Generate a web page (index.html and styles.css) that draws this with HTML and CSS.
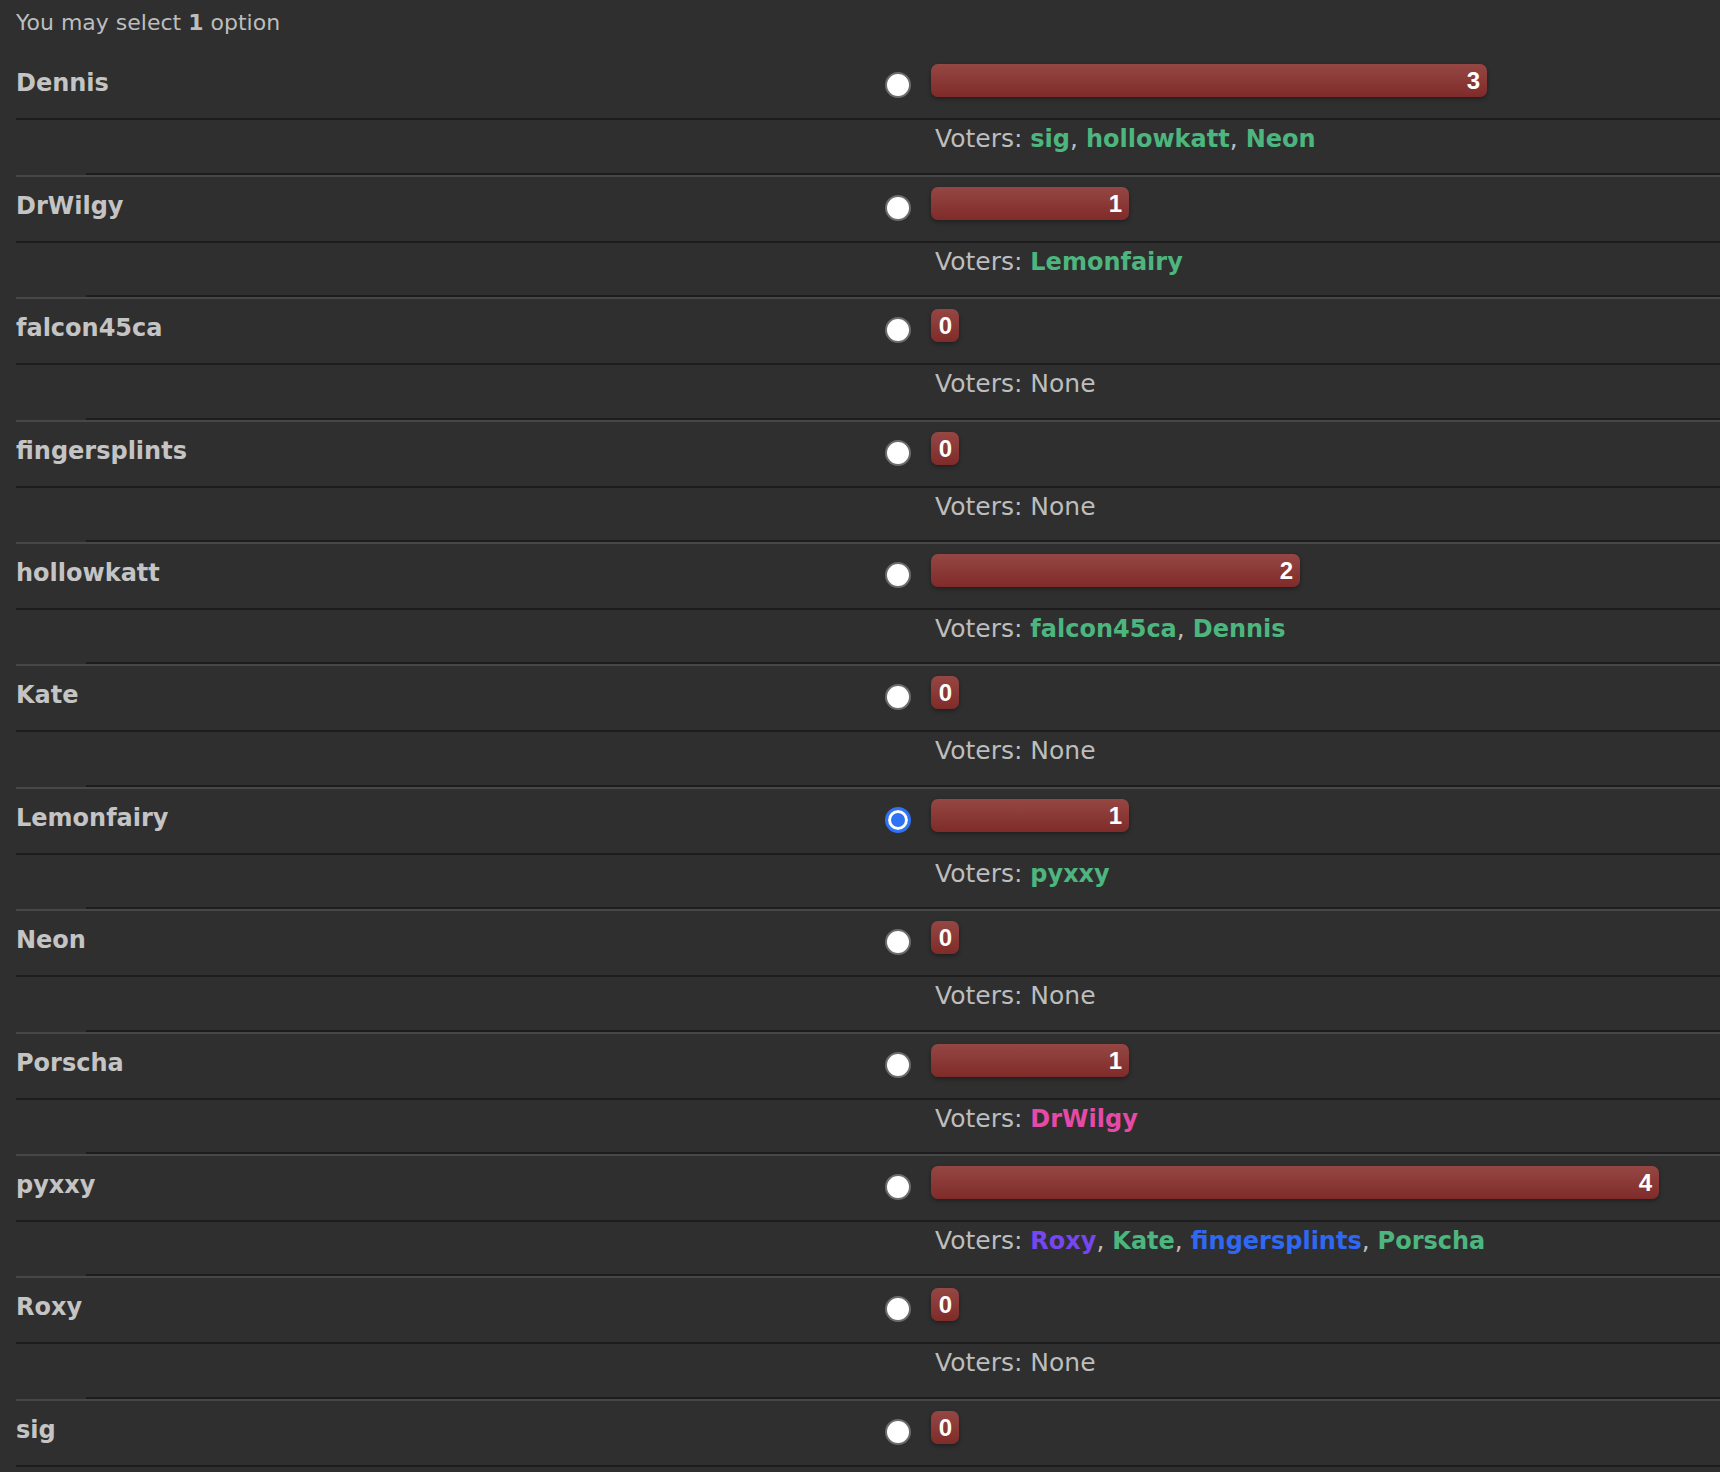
FILE: index.html
```html
<!DOCTYPE html>
<html lang="en">
<head>
  <meta charset="UTF-8" />
  <meta name="viewport" content="width=device-width, initial-scale=1.0" />
  <title>Poll</title>
  <link rel="stylesheet" href="styles.css">
</head>
<body>
  <div class="poll">
    <p class="poll-info">You may select <b>1</b> option</p>

    <!-- one .option per candidate: name/radio/bar row, then voters row -->
    <div class="option first">
      <div class="option-main">
        <span class="option-name">Dennis</span>
        <span class="option-pick"><input type="radio" name="vote" /></span>
        <span class="option-bar"><span class="bar" style="width:556px">3</span></span>
      </div>
      <div class="option-voters">
        <span class="voters-gap"></span>
        <span class="voters">Voters: <b class="user green">sig</b>, <b class="user green">hollowkatt</b>, <b class="user green">Neon</b></span>
      </div>
    </div>

    <div class="option">
      <div class="option-main">
        <span class="option-name">DrWilgy</span>
        <span class="option-pick"><input type="radio" name="vote" /></span>
        <span class="option-bar"><span class="bar" style="width:198px">1</span></span>
      </div>
      <div class="option-voters">
        <span class="voters-gap"></span>
        <span class="voters">Voters: <b class="user green">Lemonfairy</b></span>
      </div>
    </div>

    <div class="option">
      <div class="option-main">
        <span class="option-name">falcon45ca</span>
        <span class="option-pick"><input type="radio" name="vote" /></span>
        <span class="option-bar"><span class="bar">0</span></span>
      </div>
      <div class="option-voters">
        <span class="voters-gap"></span>
        <span class="voters">Voters: None</span>
      </div>
    </div>

    <div class="option">
      <div class="option-main">
        <span class="option-name">fingersplints</span>
        <span class="option-pick"><input type="radio" name="vote" /></span>
        <span class="option-bar"><span class="bar">0</span></span>
      </div>
      <div class="option-voters">
        <span class="voters-gap"></span>
        <span class="voters">Voters: None</span>
      </div>
    </div>

    <div class="option">
      <div class="option-main">
        <span class="option-name">hollowkatt</span>
        <span class="option-pick"><input type="radio" name="vote" /></span>
        <span class="option-bar"><span class="bar" style="width:369px">2</span></span>
      </div>
      <div class="option-voters">
        <span class="voters-gap"></span>
        <span class="voters">Voters: <b class="user green">falcon45ca</b>, <b class="user green">Dennis</b></span>
      </div>
    </div>

    <div class="option">
      <div class="option-main">
        <span class="option-name">Kate</span>
        <span class="option-pick"><input type="radio" name="vote" /></span>
        <span class="option-bar"><span class="bar">0</span></span>
      </div>
      <div class="option-voters">
        <span class="voters-gap"></span>
        <span class="voters">Voters: None</span>
      </div>
    </div>

    <div class="option">
      <div class="option-main">
        <span class="option-name">Lemonfairy</span>
        <span class="option-pick"><input type="radio" name="vote" checked /></span>
        <span class="option-bar"><span class="bar" style="width:198px">1</span></span>
      </div>
      <div class="option-voters">
        <span class="voters-gap"></span>
        <span class="voters">Voters: <b class="user green">pyxxy</b></span>
      </div>
    </div>

    <div class="option">
      <div class="option-main">
        <span class="option-name">Neon</span>
        <span class="option-pick"><input type="radio" name="vote" /></span>
        <span class="option-bar"><span class="bar">0</span></span>
      </div>
      <div class="option-voters">
        <span class="voters-gap"></span>
        <span class="voters">Voters: None</span>
      </div>
    </div>

    <div class="option">
      <div class="option-main">
        <span class="option-name">Porscha</span>
        <span class="option-pick"><input type="radio" name="vote" /></span>
        <span class="option-bar"><span class="bar" style="width:198px">1</span></span>
      </div>
      <div class="option-voters">
        <span class="voters-gap"></span>
        <span class="voters">Voters: <b class="user pink">DrWilgy</b></span>
      </div>
    </div>

    <div class="option">
      <div class="option-main">
        <span class="option-name">pyxxy</span>
        <span class="option-pick"><input type="radio" name="vote" /></span>
        <span class="option-bar"><span class="bar" style="width:728px">4</span></span>
      </div>
      <div class="option-voters">
        <span class="voters-gap"></span>
        <span class="voters">Voters: <b class="user purple">Roxy</b>, <b class="user green">Kate</b>, <b class="user blue">fingersplints</b>, <b class="user green">Porscha</b></span>
      </div>
    </div>

    <div class="option">
      <div class="option-main">
        <span class="option-name">Roxy</span>
        <span class="option-pick"><input type="radio" name="vote" /></span>
        <span class="option-bar"><span class="bar">0</span></span>
      </div>
      <div class="option-voters">
        <span class="voters-gap"></span>
        <span class="voters">Voters: None</span>
      </div>
    </div>

    <div class="option">
      <div class="option-main">
        <span class="option-name">sig</span>
        <span class="option-pick"><input type="radio" name="vote" /></span>
        <span class="option-bar"><span class="bar">0</span></span>
      </div>
      <div class="option-voters">
        <span class="voters-gap"></span>
        <span class="voters">Voters: None</span>
      </div>
    </div>
  </div>
</body>
</html>
```

FILE: styles.css
```css
/* theme */
:root {
  --bg: #2f2f2f;
  --text: #bdbdbd;
  --name: #c4c4c4;
  --line-dark: #1d1d1d;
  --line-light: #474747;
  --green: #4db67f;
  --pink: #e64aa6;
  --purple: #7646f2;
  --blue: #2f69f3;
}

body {
  margin: 0;
  background: var(--bg);
  color: var(--text);
  font-family: "DejaVu Sans", Verdana, sans-serif;
  overflow: hidden;
}

.poll {
  padding-left: 16px;
}

.poll-info {
  margin: 0;
  padding-top: 8px;
  height: 44.4px;
  font-size: 22px;
  line-height: 30px;
}

/* option rows */
.option-main {
  display: grid;
  grid-template-columns: 853px 62px 1fr;
  height: 64px;
  border-top: 2px solid var(--line-light);
  border-bottom: 2px solid var(--line-dark);
}

.option.first .option-main {
  border-top-color: transparent;
}

.option-name {
  padding-top: 14px;
  font-size: 24px;
  line-height: 30px;
  font-weight: bold;
  color: var(--name);
}

.option-pick input {
  appearance: none;
  -webkit-appearance: none;
  box-sizing: border-box;
  width: 26px;
  height: 26px;
  margin: 18px 0 0 16px;
  border: 2px solid #6c6c6c;
  border-radius: 50%;
  background: #fff;
}

.option-pick input:checked {
  border: 3px solid #2f72f4;
  box-shadow: inset 0 0 0 3px #fff, inset 0 0 0 10px #2f72f4;
}

.option-bar {
  padding-top: 10px;
}

.bar {
  display: inline-block;
  box-sizing: border-box;
  min-width: 28px;
  height: 33px;
  padding: 0 7px;
  border-radius: 7px;
  background: linear-gradient(#954744, #7f2b29);
  box-shadow: 0 2px 4px rgba(0, 0, 0, 0.35);
  color: #fff;
  font-family: "Liberation Sans", Arial, sans-serif;
  font-weight: bold;
  font-size: 24px;
  line-height: 33px;
  text-align: right;
}

/* voters row */
.option-voters {
  display: grid;
  grid-template-columns: 70px 1fr;
}

.voters {
  height: 48.4px;
  padding: 4px 0 0 849px;
  border-bottom: 2px solid var(--line-dark);
  font-size: 25px;
  line-height: 30px;
  white-space: nowrap;
}

.user {
  font-size: 24px;
}

.user.green { color: var(--green); }
.user.pink { color: var(--pink); }
.user.purple { color: var(--purple); }
.user.blue { color: var(--blue); }
```
